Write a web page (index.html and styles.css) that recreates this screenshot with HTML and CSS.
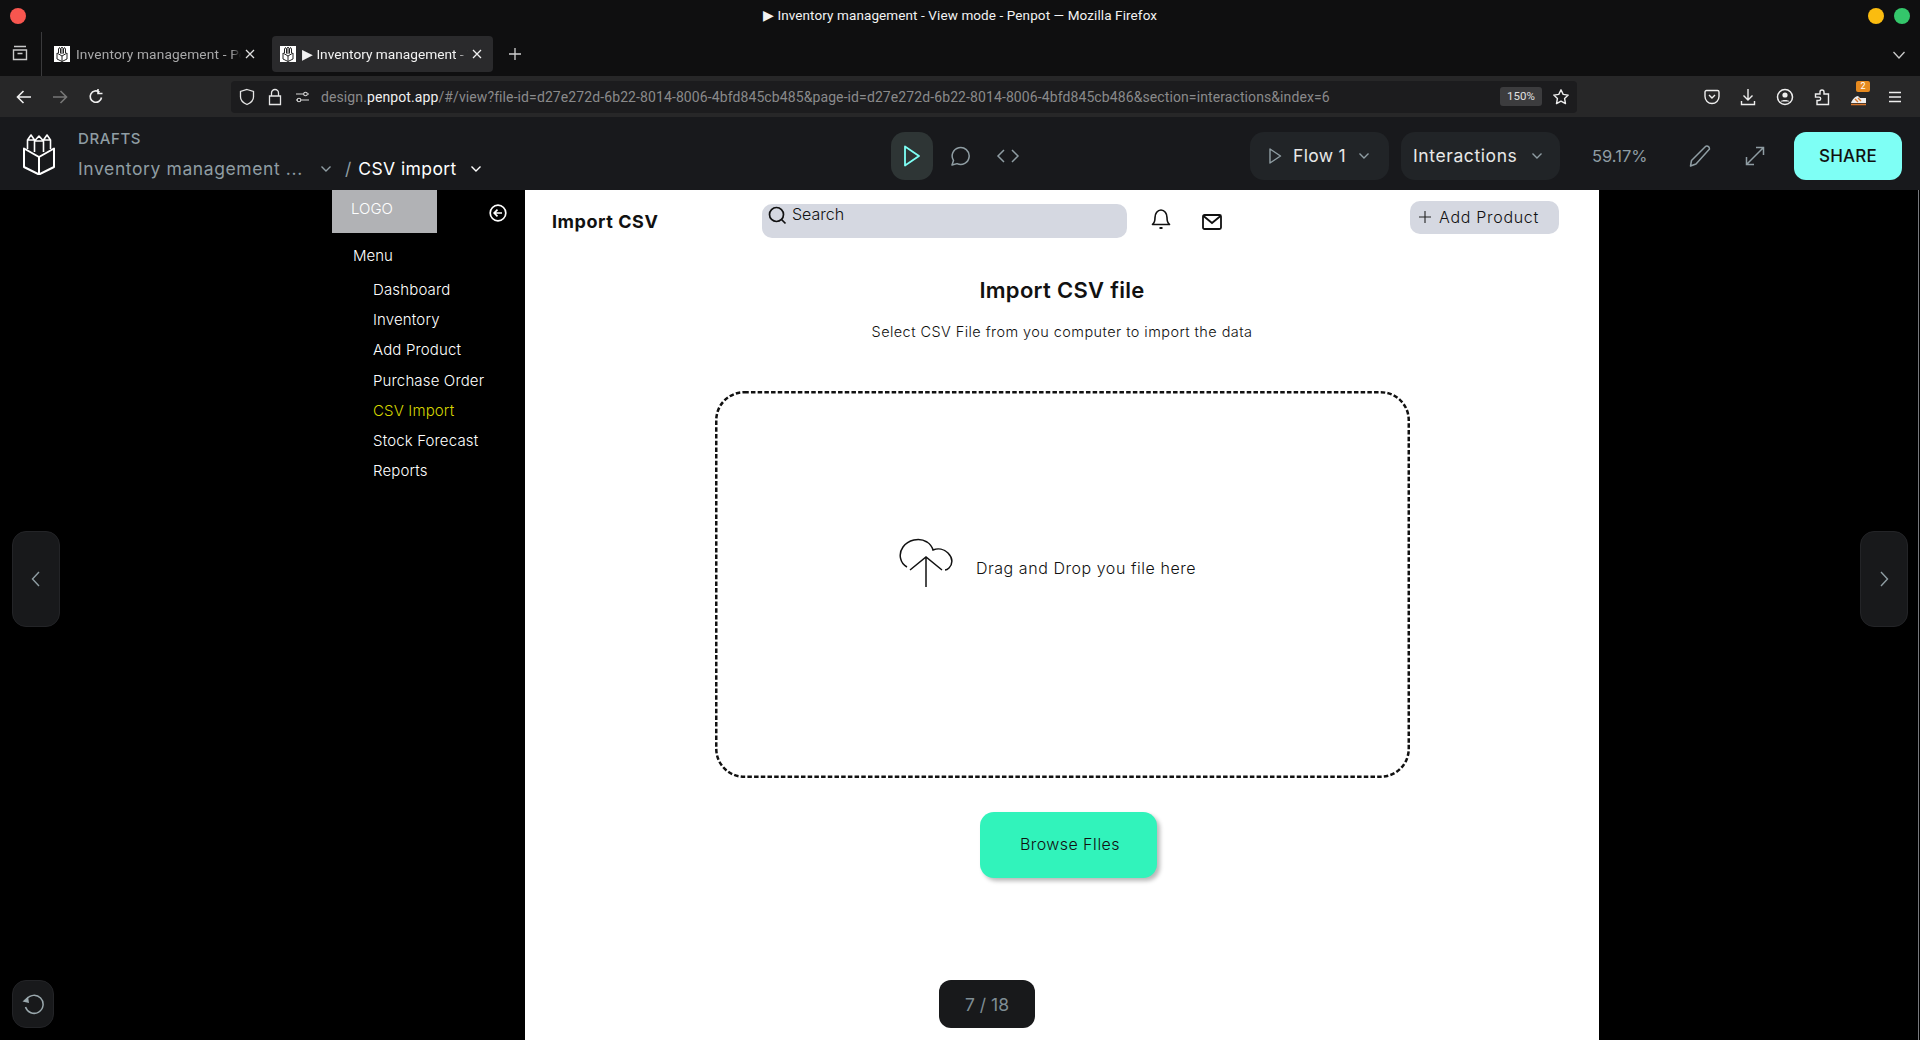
FILE: index.html
```html
<!DOCTYPE html>
<html lang="en">
<head>
<meta charset="utf-8">
<title>Inventory management - View mode - Penpot</title>
<link rel="stylesheet" href="styles.css">
</head>
<body>
<div class="titlebar">
  <span class="dot dot-red"></span>
  <span class="win-title">▶ Inventory management - View mode - Penpot — Mozilla Firefox</span>
  <span class="dot dot-yellow"></span>
  <span class="dot dot-green"></span>
</div>
<div class="tabstrip">
  <svg class="ff ff-tabs" width="18" height="18" viewBox="0 0 18 18"><path d="M3 2.500h12M2.500 6h13v9.500h-13zM6.500 9.500h5" fill="none" stroke="#c9c9c9" stroke-width="1.400"/></svg>
  <span class="tab-sep"></span>
  <div class="tab">
    <svg class="favicon" viewBox="0 0 16 16"><rect width="16" height="16" fill="#fff"/><path d="M3 7l5 3 5-3v6l-5 2.500-5-2.500zM8 10v5.500M4.500 7V3l1-1.500L6.500 3v4M7 8V2.500l1-1.500 1 1.500V8M9.500 7V3l1-1.500L11.500 3v4" fill="none" stroke="#222" stroke-width="1"/></svg>
    <span class="tab-label">Inventory management - Pe</span>
    <svg class="tab-close" width="10" height="10" viewBox="0 0 10 10"><path d="M1 1l8 8M9 1l-8 8" stroke="#e0e0e0" stroke-width="1.300"/></svg>
  </div>
  <div class="tab tab-active">
    <svg class="favicon" viewBox="0 0 16 16"><rect width="16" height="16" fill="#fff"/><path d="M3 7l5 3 5-3v6l-5 2.500-5-2.500zM8 10v5.500M4.500 7V3l1-1.500L6.500 3v4M7 8V2.500l1-1.500 1 1.500V8M9.500 7V3l1-1.500L11.500 3v4" fill="none" stroke="#222" stroke-width="1"/></svg>
    <span class="tab-label">▶ Inventory management - V</span>
    <svg class="tab-close" width="10" height="10" viewBox="0 0 10 10"><path d="M1 1l8 8M9 1l-8 8" stroke="#f0f0f0" stroke-width="1.300"/></svg>
  </div>
  <svg class="new-tab" width="14" height="14" viewBox="0 0 14 14"><path d="M7 1v12M1 7h12" stroke="#d0d0d0" stroke-width="1.300"/></svg>
  <svg class="tabs-more" width="14" height="10" viewBox="0 0 14 10"><path d="M1.500 2l5.500 6 5.500-6" fill="none" stroke="#c9c9c9" stroke-width="1.300"/></svg>
</div>
<div class="toolbar">
  <div class="nav-btns">
    <svg width="18" height="18" viewBox="0 0 18 18"><path d="M16 9H2.500M8.500 3L2.500 9l6 6" fill="none" stroke="#f0f0f0" stroke-width="1.600"/></svg>
    <svg width="18" height="18" viewBox="0 0 18 18"><path d="M2 9h13.500M9.500 3l6 6-6 6" fill="none" stroke="#777" stroke-width="1.600"/></svg>
    <svg width="18" height="18" viewBox="0 0 18 18"><path d="M14.500 9.500A5.700 5.700 0 1 1 12.500 4.200M11 1v4.500h4.500" fill="none" stroke="#f0f0f0" stroke-width="1.600"/></svg>
  </div>
  <div class="urlbar">
    <svg width="16" height="18" viewBox="0 0 16 18"><path d="M8 1.500l6.500 2v5.500c0 3.500-3 6-6.500 7.500C4.500 15 1.500 12.500 1.500 9V3.500z" fill="none" stroke="#e6e6e6" stroke-width="1.300"/></svg>
    <svg class="u-lock" width="14" height="18" viewBox="0 0 14 18"><path d="M1.500 8h11v8.500h-11zM3.500 8V5a3.500 3.500 0 0 1 7 0v3" fill="none" stroke="#e6e6e6" stroke-width="1.300"/></svg>
    <svg class="u-perm" width="15" height="12" viewBox="0 0 15 12"><path d="M1 3h8M12.500 3H14M1 9h1.500M6 9h8" stroke="#d8d8d8" stroke-width="1.100" fill="none"/><circle cx="10.500" cy="3" r="1.800" fill="none" stroke="#d8d8d8" stroke-width="1.100"/><circle cx="4" cy="9" r="1.800" fill="none" stroke="#d8d8d8" stroke-width="1.100"/></svg>
    <span class="url"><span class="url-dim">design.</span><span class="url-host">penpot.app</span><span class="url-dim">/#/view?file-id=d27e272d-6b22-8014-8006-4bfd845cb485&amp;page-id=d27e272d-6b22-8014-8006-4bfd845cb486&amp;section=interactions&amp;index=6</span></span>
    <span class="zoom-badge">150%</span>
    <svg class="u-star" width="18" height="18" viewBox="0 0 18 18"><path d="M9 1.800l2.200 4.600 5 .7-3.600 3.500.9 5L9 13.200l-4.500 2.400.9-5L1.800 7.100l5-.7z" fill="none" stroke="#eee" stroke-width="1.400" stroke-linejoin="round"/></svg>
  </div>
  <div class="tb-icons">
    <svg width="16" height="16" viewBox="0 0 16 16"><path d="M2.500 1.500h11a1.500 1.500 0 0 1 1.500 1.500v4.500a7 7 0 0 1-14 0V3a1.500 1.500 0 0 1 1.500-1.500zM5 6l3 3 3-3" fill="none" stroke="#eee" stroke-width="1.400"/></svg>
    <svg width="16" height="18" viewBox="0 0 16 18"><path d="M8 1v10.500M3.500 7.500L8 12l4.500-4.500M1.500 13v3.500h13V13" fill="none" stroke="#eee" stroke-width="1.400"/></svg>
    <svg width="18" height="18" viewBox="0 0 18 18"><circle cx="9" cy="9" r="7.500" fill="none" stroke="#eee" stroke-width="1.500"/><circle cx="9" cy="7" r="2.600" fill="#eee"/><path d="M4.500 13.500c1-2 8-2 9 0z" fill="#eee"/></svg>
    <svg width="16" height="18" viewBox="0 0 16 18"><path d="M1.500 6H6V4a2 2 0 0 1 4 0V6h4.500v10.500H3V12.500H5a1.700 1.700 0 0 0 0-3.400H1.500z" fill="none" stroke="#eee" stroke-width="1.400"/></svg>
    <div class="ext">
      <svg width="18" height="14" viewBox="0 0 18 14"><path d="M1 11c1-3 4-7 7-7l2 2h6v5H8z" fill="#eee"/><path d="M1 12.500h15M5 7l3 3M8 6l3 3" stroke="#d9772b" stroke-width="1.400" fill="none"/></svg>
      <span class="ext-badge">2</span>
    </div>
    <svg width="14" height="14" viewBox="0 0 14 14"><path d="M1 2.500h12M1 7h12M1 11.500h12" stroke="#eee" stroke-width="1.500"/></svg>
  </div>
</div>
<header class="apphead">
  <svg class="logo" width="32" height="42" viewBox="0 0 32 42"><path d="M1 15.500l15 8.500 15-8.500v18.500L16 41.500 1 34zM16 24v17.500" fill="none" stroke="#fff" stroke-width="2" stroke-linejoin="round"/><path d="M4.500 16V7L8 2l3.500 5v11M11.500 19V8L16 3l4.500 5v11M20.500 18V7L24 2l3.500 5v9M4.500 7h7M11.500 8h9M20.500 7h7" fill="none" stroke="#fff" stroke-width="1.600" stroke-linejoin="round"/></svg>
  <div class="crumbs">
    <div class="drafts">DRAFTS</div>
    <div class="crumb-row">
      <span class="file-name">Inventory management ...</span>
      <svg class="chev chev-file" width="12" height="8" viewBox="0 0 12 8"><path d="M1.500 1.500L6 6l4.500-4.500" fill="none" stroke="#8f9da3" stroke-width="1.400"/></svg>
      <span class="slash">/</span>
      <span class="page-name">CSV import</span>
      <svg class="chev chev-page" width="12" height="8" viewBox="0 0 12 8"><path d="M1.500 1.500L6 6l4.500-4.500" fill="none" stroke="#fff" stroke-width="1.400"/></svg>
    </div>
  </div>
  <div class="modes">
    <span class="mode mode-on"><svg width="20" height="24" viewBox="0 0 20 24"><path d="M3 2.500l14 9.500L3 21.500z" fill="none" stroke="#7efff5" stroke-width="1.800" stroke-linejoin="round"/></svg></span>
    <span class="mode"><svg class="ic-comment" width="22" height="22" viewBox="0 0 22 22"><path d="M4 20l1.500-4.500A8.500 8.500 0 1 1 9 18.600z" fill="none" stroke="#8f9da3" stroke-width="1.500" stroke-linejoin="round"/></svg></span>
    <span class="mode"><svg width="24" height="16" viewBox="0 0 24 16"><path d="M8 2L2 8l6 6M16 2l6 6-6 6" fill="none" stroke="#8f9da3" stroke-width="1.500"/></svg></span>
  </div>
  <div class="head-right">
    <div class="select select-flow">
      <svg width="14" height="18" viewBox="0 0 14 18"><path d="M2 2l10.500 7L2 16z" fill="none" stroke="#8f9da3" stroke-width="1.400" stroke-linejoin="round"/></svg>
      <span class="select-label">Flow 1</span>
      <svg width="12" height="8" viewBox="0 0 12 8"><path d="M1.500 1.500L6 6l4.500-4.500" fill="none" stroke="#8f9da3" stroke-width="1.400"/></svg>
    </div>
    <div class="select select-inter">
      <span class="select-label">Interactions</span>
      <svg width="12" height="8" viewBox="0 0 12 8"><path d="M1.500 1.500L6 6l4.500-4.500" fill="none" stroke="#8f9da3" stroke-width="1.400"/></svg>
    </div>
    <span class="zoom-val">59.17%</span>
    <svg class="ic-pencil" width="24" height="24" viewBox="0 0 24 24"><path d="M17.500 2.500c1-1 4-.5 4 2.500L8 20l-5.500 2 1-5.500z" fill="none" stroke="#8f9da3" stroke-width="1.500" stroke-linejoin="round"/></svg>
    <svg class="ic-expand" width="22" height="22" viewBox="0 0 22 22"><path d="M3 19L19 3M12 2.500h7.500V10M2.500 12v7.500H10" fill="none" stroke="#8f9da3" stroke-width="1.500"/></svg>
    <span class="share">SHARE</span>
  </div>
</header>
<main class="viewer">
  <aside class="side">
    <div class="side-top">
      <div class="brand">LOGO</div>
      <svg class="side-back" width="18" height="18" viewBox="0 0 18 18"><circle cx="9" cy="9" r="7.800" fill="none" stroke="#fff" stroke-width="1.700"/><path d="M13 9H5.500M8.500 5.700L5.200 9l3.300 3.300" fill="none" stroke="#fff" stroke-width="1.700"/></svg>
    </div>
    <div class="menu-title">Menu</div>
    <ul class="menu">
      <li>Dashboard</li>
      <li>Inventory</li>
      <li>Add Product</li>
      <li>Purchase Order</li>
      <li class="menu-active">CSV Import</li>
      <li>Stock Forecast</li>
      <li>Reports</li>
    </ul>
  </aside>
  <section class="board">
    <div class="topbar">
      <h1 class="page-title">Import CSV</h1>
      <div class="search">
        <svg width="19" height="19" viewBox="0 0 19 19"><circle cx="8.500" cy="8.500" r="7" fill="none" stroke="#111" stroke-width="1.700"/><path d="M13.500 13.500l4 4" stroke="#111" stroke-width="1.700"/></svg>
        <span>Search</span>
      </div>
      <svg class="ic-bell" width="20" height="22" viewBox="0 0 20 22"><path d="M1.500 16.500c2-1.500 2.500-3 2.500-7C4 5.500 6.500 2 10 2s6 3.500 6 7.500c0 4 .5 5.500 2.500 7z" fill="none" stroke="#111" stroke-width="1.600" stroke-linejoin="round"/><path d="M8.500 20h3" stroke="#111" stroke-width="2"/></svg>
      <svg class="ic-mail" width="20" height="16" viewBox="0 0 20 16"><rect x="1" y="1" width="18" height="14" rx="1.500" fill="none" stroke="#111" stroke-width="1.800"/><path d="M1.500 2l8.500 7 8.500-7" fill="none" stroke="#111" stroke-width="1.800"/></svg>
      <div class="add-btn">
        <svg width="12" height="12" viewBox="0 0 12 12"><path d="M6 0v12M0 6h12" stroke="#222" stroke-width="1.100"/></svg>
        <span>Add Product</span>
      </div>
    </div>
    <h2 class="heading">Import CSV file</h2>
    <p class="sub">Select CSV File from you computer to import the data</p>
    <div class="drop">
      <svg class="drop-border" width="695" height="387" viewBox="0 0 695 387"><rect x="1.250" y="1.250" width="692.500" height="384.500" rx="28" fill="none" stroke="#111" stroke-width="2.500" stroke-dasharray="4.500 2.200"/></svg>
      <svg class="cloud" width="56" height="50" viewBox="0 0 56 50"><path d="M9 29C2 25 0 16 5 9 10 2 21-1 29 4c3 2 5 4 6 8 5-2 11-1 15 3 5 5 5 11 1 15-1 1-3 2-4 2" fill="none" stroke="#111" stroke-width="1.500"/><path d="M12 32L28 19l16 13M28 19v30" fill="none" stroke="#111" stroke-width="1.500"/></svg>
      <span class="drop-text">Drag and Drop you file here</span>
    </div>
    <div class="browse">Browse FIles</div>
  </section>
  <button class="pager pager-prev" type="button"><svg width="10" height="16" viewBox="0 0 10 16"><path d="M8 1L1.500 8 8 15" fill="none" stroke="#8f9da3" stroke-width="1.400"/></svg></button>
  <button class="pager pager-next" type="button"><svg width="10" height="16" viewBox="0 0 10 16"><path d="M2 1l6.500 7L2 15" fill="none" stroke="#8f9da3" stroke-width="1.400"/></svg></button>
  <button class="restart" type="button"><svg class="ic-restart" width="24" height="22" viewBox="0 0 24 22"><path d="M6.500 6.500A9 9 0 1 1 5.500 14" fill="none" stroke="#9aa8ad" stroke-width="1.500"/><path d="M2.500 8.500L9 10 8 3.500z" fill="#9aa8ad"/></svg></button>
  <div class="counter">7 / 18</div>
</main>
</body>
</html>
```
FILE: styles.css
```css
* { box-sizing: border-box; }
html, body { margin: 0; padding: 0; }
body {
  width: 1920px;
  height: 1040px;
  overflow: hidden;
  display: flex;
  flex-direction: column;
  background: #000;
  font-family: "Noto Sans", sans-serif;
}
svg { display: block; flex: none; }

/* Browser chrome */
.titlebar {
  height: 32px;
  background: #0f0f10;
  display: flex;
  align-items: center;
  padding: 0 10px;
  position: relative;
}
.dot { width: 16px; height: 16px; border-radius: 50%; flex: none; }
.dot-red { background: #f8564f; }
.dot-yellow { background: #fbbc0f; margin-right: 10px; }
.dot-green { background: #34c76b; }
.win-title {
  flex: 1;
  text-align: center;
  color: #f2f2f2;
  font-family: "Roboto", sans-serif;
  font-size: 13.500px;
  font-weight: 400;
  line-height: 16px;
  letter-spacing: .1px;
  padding: 0 6px 2px 32px;
}
.tabstrip {
  height: 44px;
  background: #0f0f10;
  display: flex;
  align-items: flex-start;
  position: relative;
}
.ff-tabs { margin: 12px 0 0 11px; }
.tab-sep { width: 1px; height: 44px; background: #3a3a3c; margin-left: 12px; }
.tab {
  width: 221px;
  height: 36px;
  margin-top: 4px;
  border-radius: 4px;
  display: flex;
  align-items: center;
  padding: 0 8px 0 12px;
  color: #a9a9aa;
  font-family: "Roboto", sans-serif;
  font-size: 13.700px;
  letter-spacing: .15px;
}
.tab-active { background: #2a2a2c; color: #f2f2f2; margin-left: 9px; padding: 0 11px 0 8px; letter-spacing: 0; }
.favicon { width: 16px; height: 16px; margin-right: 6px; flex: none; }
.tab-label {
  flex: 1;
  min-width: 0;
  white-space: nowrap;
  -webkit-mask-image: linear-gradient(to right, #000 94%, transparent);
  mask-image: linear-gradient(to right, #000 94%, transparent);
}
.tab-close { margin-left: 4px; }
.new-tab { margin: 15px 0 0 15px; }
.tabs-more { margin: 18px 0 0 1370px; }

.toolbar {
  height: 41px;
  background: #272728;
  display: flex;
  align-items: center;
  padding-left: 15px;
}
.nav-btns { display: flex; gap: 18px; width: 216px; }
.urlbar {
  width: 1346px;
  height: 32px;
  background: #1c1c1e;
  border-radius: 4px;
  display: flex;
  align-items: center;
  padding-left: 8px;
}
.u-lock { margin-left: 13px; }
.u-perm { margin-left: 13px; }
.url {
  margin-left: 11px;
  width: 1179px;
  font-family: "Roboto", sans-serif;
  font-size: 14px;
  letter-spacing: .1px;
  white-space: nowrap;
  overflow: hidden;
}
.url-dim { color: #8a8a8b; }
.url-host { color: #f0f0f0; }
.zoom-badge {
  width: 42px;
  height: 19px;
  background: #3c3c3e;
  border-radius: 3px;
  color: #e0e0e0;
  font-family: "Roboto", sans-serif;
  font-size: 11.500px;
  line-height: 19px;
  text-align: center;
}
.u-star { margin-left: 10px; }
.tb-icons {
  display: flex;
  align-items: center;
  margin-left: 127px;
  gap: 20px;
}
.ext { position: relative; width: 18px; height: 18px; display: flex; align-items: flex-end; }
.ext-badge {
  position: absolute;
  left: 6px;
  top: -7px;
  width: 14px;
  height: 11px;
  background: #e78a1f;
  border-radius: 2px;
  color: #fff;
  font-family: "Roboto", sans-serif;
  font-size: 9px;
  line-height: 11px;
  text-align: center;
}

/* Penpot header */
.apphead {
  height: 73px;
  background: #18191c;
  display: flex;
  align-items: center;
  padding: 0 18px 0 23px;
  font-family: "Inter", sans-serif;
}
.logo { margin-right: 23px; }
.crumbs { width: 813px; padding-top: 2px; }
.drafts { color: #8f9da3; font-size: 15px; line-height: 18px; font-weight: 500; letter-spacing: .6px; }
.crumb-row {
  display: flex;
  align-items: center;
  margin-top: 10px;
  font-size: 17.500px;
  line-height: 22px;
}
.file-name { color: #8f9da3; width: 223px; white-space: nowrap; letter-spacing: .6px; }
.chev-file { margin-left: 19px; }
.slash { color: #8f9da3; margin-left: 13px; }
.page-name { color: #fff; margin-left: 7px; width: 99px; white-space: nowrap; letter-spacing: .4px; }
.chev-page { margin-left: 13px; }
.modes { display: flex; gap: 6px; margin-top: 4px; }
.mode {
  width: 42px;
  height: 48px;
  border-radius: 14px;
  display: flex;
  align-items: center;
  justify-content: center;
}
.mode-on { background: #2e3535; }
.ic-comment { margin-right: 3px; }
.head-right { display: flex; align-items: center; margin: 4px 0 0 auto; }
.select {
  height: 48px;
  background: #212427;
  border-radius: 14px;
  display: flex;
  align-items: center;
}
.select-flow { width: 139px; padding-left: 18px; }
.select-inter { width: 159px; margin-left: 12px; padding-left: 12px; }
.select-label { color: #e8e8e8; font-size: 17.500px; white-space: nowrap; }
.select-flow .select-label { width: 65px; margin-left: 11px; letter-spacing: .3px; }
.select-inter .select-label { width: 118px; letter-spacing: .6px; }
.zoom-val { margin-left: 32px; width: 96px; color: #8f9da3; font-size: 16.500px; white-space: nowrap; }
.ic-expand { margin-left: 32px; }
.share {
  margin-left: 28px;
  width: 108px;
  height: 48px;
  background: #7efff5;
  border-radius: 12px;
  color: #111;
  font-size: 17px;
  font-weight: 500;
  letter-spacing: .2px;
  line-height: 48px;
  text-align: center;
}

/* Viewer */
.viewer {
  flex: 1;
  min-height: 0;
  position: relative;
  background: #000;
  display: flex;
  padding-left: 332px;
  font-family: "Inter", sans-serif;
}
.viewer::after {
  content: "";
  position: absolute;
  top: 0;
  bottom: 0;
  right: 1px;
  width: 1px;
  background: #77797d;
}
.side { width: 193px; flex: none; color: #fff; font-weight: 300; }
.side-top { display: flex; align-items: flex-start; }
.brand {
  width: 105px;
  height: 43px;
  background: #b1b2b5;
  padding: 9px 0 0 19px;
  font-size: 15px;
  line-height: 20px;
}
.side-back { margin: 14px 0 0 52px; }
.menu-title { margin: 13px 0 0 21px; font-size: 15px; line-height: 20px; }
.menu { list-style: none; margin: 9px 0 0; padding: 0 0 0 41px; }
.menu li { height: 30.200px; line-height: 30px; font-size: 15px; letter-spacing: .15px; white-space: nowrap; }
.menu .menu-active { color: #d6d600; }

.board {
  width: 1074px;
  flex: none;
  background: #fff;
  color: #111;
  display: flex;
  flex-direction: column;
  align-items: center;
}
.topbar { width: 100%; height: 48px; display: flex; align-items: flex-start; padding-left: 27px; }
.page-title { margin: 21px 0 0; width: 210px; font-size: 18px; line-height: 22px; font-weight: 700; letter-spacing: .55px; white-space: nowrap; }
.search {
  width: 365px;
  height: 34px;
  margin-top: 14px;
  background: #d5d8e1;
  border-radius: 10px;
  display: flex;
  align-items: flex-start;
  padding: 2px 0 0 6px;
  font-size: 16px;
  font-weight: 300;
  line-height: 16px;
}
.search span { margin-left: 5px; }
.ic-bell { margin: 18px 0 0 24px; }
.ic-mail { margin: 24px 0 0 31px; }
.add-btn {
  margin: 11px 0 0 188px;
  width: 149px;
  height: 33px;
  background: #d5d8e1;
  border-radius: 10px;
  display: flex;
  align-items: center;
  padding: 0 0 2px 9px;
  font-size: 16px;
  font-weight: 300;
  letter-spacing: .7px;
}
.add-btn span { margin-left: 8px; white-space: nowrap; }
.heading { margin: 38px 0 1px; font-size: 22px; line-height: 28px; font-weight: 600; letter-spacing: .3px; }
.sub { margin: 17px 0 0; font-size: 14.500px; line-height: 20px; font-weight: 300; letter-spacing: .43px; }
.drop {
  width: 695px;
  height: 387px;
  margin-top: 49px;
  position: relative;
  display: flex;
  align-items: center;
  justify-content: center;
  gap: 22px;
  padding: 0 30px 33px 0;
}
.drop-border { position: absolute; left: 0; top: 0; }
.cloud { margin-bottom: 11px; }
.drop-text { font-size: 16px; font-weight: 300; letter-spacing: .55px; white-space: nowrap; }
.browse {
  margin: 34px 0 0 12px;
  width: 177px;
  height: 66px;
  background: #31f3bb;
  border-radius: 14px;
  box-shadow: 3px 3px 4px rgba(0, 0, 0, .28);
  padding-left: 4px;
  font-size: 16px;
  font-weight: 300;
  letter-spacing: .4px;
  line-height: 65px;
  text-align: center;
}

.pager, .restart {
  position: absolute;
  padding: 0;
  background: #18191b;
  border: 1px solid #232427;
  border-radius: 14px;
  display: flex;
  align-items: center;
  justify-content: center;
}
.pager { top: 341px; width: 48px; height: 96px; }
.pager-prev { left: 12px; }
.pager-next { left: 1860px; }
.restart { left: 12px; top: 790px; width: 42px; height: 48px; }
.ic-restart { margin-right: 3px; }
.counter {
  position: absolute;
  left: 939px;
  top: 790px;
  width: 96px;
  height: 48px;
  background: #18191b;
  border-radius: 12px;
  color: #7f8d94;
  font-size: 17.500px;
  line-height: 50px;
  text-align: center;
}
```
